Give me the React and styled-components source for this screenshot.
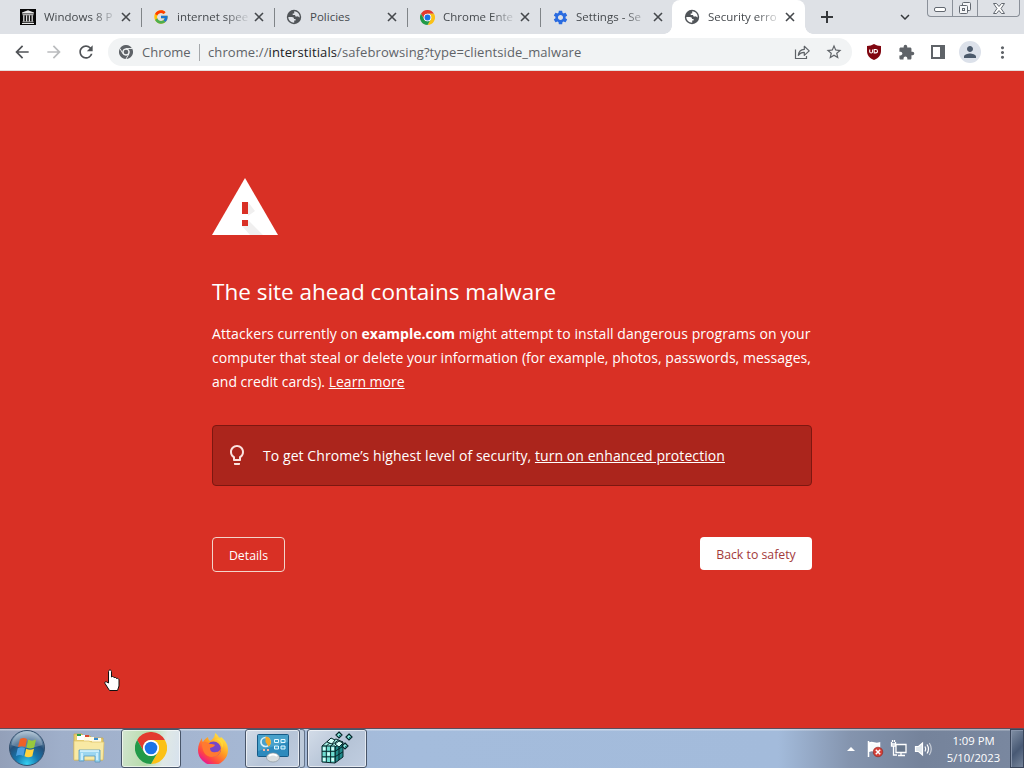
import React from "react";
import styled, { createGlobalStyle, css } from "styled-components";
import {
  MdArrowBack,
  MdArrowForward,
  MdExtension,
  MdKeyboardArrowDown,
  MdLightbulbOutline,
  MdMoreVert,
  MdPerson,
  MdRefresh,
  MdSettings,
  MdStarBorder,
} from "react-icons/md";
import { FcGoogle } from "react-icons/fc";

const tabs = [
  { id: 1, title: "Windows 8 P", icon: "archive" },
  { id: 2, title: "internet spee", icon: "google" },
  { id: 3, title: "Policies", icon: "globe" },
  { id: 4, title: "Chrome Ente", icon: "chrome" },
  { id: 5, title: "Settings - Se", icon: "settings" },
  { id: 6, title: "Security erro", icon: "globe", active: true },
];

function ChromeLogo({ size, mono }) {
  const c = mono
    ? ["#5f6368", "#5f6368", "#5f6368", "#5f6368", "#f1f3f4"]
    : ["#e33b2e", "#fbc116", "#229a48", "#1a73e8", "#fff"];
  return (
    <svg width={size} height={size} viewBox="0 0 48 48">
      <path d="M3.2 12A24 24 0 0 1 44.8 12H24A12 12 0 0 0 13.6 30Z" fill={c[0]} />
      <path d="M44.8 12A24 24 0 0 1 24 48L34.4 30A12 12 0 0 0 24 12Z" fill={c[1]} />
      <path d="M24 48A24 24 0 0 1 3.2 12L13.6 30A12 12 0 0 0 34.4 30Z" fill={c[2]} />
      {mono && (
        <path d="M24 12H45M13.6 30 3.2 12M34.4 30 24 48" stroke={c[4]} strokeWidth="3" />
      )}
      <circle cx="24" cy="24" r="12" fill={c[4]} />
      <circle cx="24" cy="24" r={mono ? 8 : 9.5} fill={c[3]} />
    </svg>
  );
}

function GlobeIcon({ land }) {
  return (
    <svg width="16" height="16" viewBox="0 0 16 16">
      <circle cx="8" cy="8" r="7.2" fill="#505458" />
      <path d="M8.2 2.3c1.8 0 3.6 1 4.7 2.7.7 1.2.9 2.3.8 3.6-.8-.2-1.2-.8-1.8-1.4-.5.3-1.2.5-2.1.3-.6-.2-.8-.8-.6-1.4H6.7V4.600h1.5Z" fill={land} />
      <path d="M2.3 8h3.5c1.7 0 2.2.8 2.2 2h1.6v1.6H8.2v2.100C5 13.700 2.300 11.300 2.300 8Z" fill={land} />
    </svg>
  );
}

function ArchiveIcon() {
  return (
    <svg width="16" height="16" viewBox="0 0 16 16">
      <path d="M0 0h16v16H0Z" fill="#080808" />
      <path d="M8 1.300 14 3.500v1H2v-1ZM2.500 5.300h11v1h-11ZM2.500 12.500h11v.8h-11ZM2 14h12v1H2Z" fill="#e8e8e8" />
      <path d="M3.800 6.300v6.200M6.600 6.300v6.200M9.400 6.300v6.200M12.200 6.300v6.200" stroke="#ddd" strokeWidth="1.3" />
    </svg>
  );
}

function Favicon({ name, active }) {
  if (name === "archive") return <ArchiveIcon />;
  if (name === "google") return <FcGoogle size={16} />;
  if (name === "chrome") return <ChromeLogo size={15} />;
  if (name === "settings") return <MdSettings size={17} color="#2a6be0" />;
  return <GlobeIcon land={active ? "#fff" : "#dee1e6"} />;
}

function CloseIcon() {
  return (
    <svg width="14" height="14" viewBox="0 0 14 14">
      <path d="m3 3 8 8M11 3l-8 8" stroke="#45484c" strokeWidth="1.6" />
    </svg>
  );
}

function ShareIcon() {
  return (
    <svg width="16" height="16" viewBox="0 0 16 16" fill="none" stroke="#5f6368" strokeWidth="1.2">
      <path d="M1.5 5.5v9h11v-2.5" />
      <path d="M4.3 11.3c.4-4 2.6-5.7 6-5.9V2.3l4.9 4.6-4.9 4.5V8.3c-2.7-.1-4.5.8-6 3Z" strokeLinejoin="round" />
    </svg>
  );
}

function ShieldIcon() {
  return (
    <svg width="16" height="18" viewBox="0 0 16 18">
      <path d="M8 1c2 1.3 4.2 2 7 2v5c0 4.5-2.5 7-7 9-4.500-2-7-4.500-7-9V3c2.800 0 5-.7 7-2Z" fill="#800610" />
      <path d="M3.700 6.500v2.300c0 1.600 2.900 1.600 2.900 0V6.500M8.200 6.500v3.400h1.600a1.700 1.700 0 0 0 0-3.400Z" fill="none" stroke="#fff" strokeWidth="1.1" />
    </svg>
  );
}

function StartOrb() {
  return (
    <svg width="38" height="38" viewBox="0 0 38 38">
      <defs>
        <radialGradient id="orb" cx=".5" cy=".95" r=".95">
          <stop offset="0" stopColor="#35d0f1" />
          <stop offset=".35" stopColor="#1677ae" />
          <stop offset=".65" stopColor="#24507a" />
          <stop offset="1" stopColor="#a4bccf" />
        </radialGradient>
      </defs>
      <circle cx="19" cy="19" r="17.5" fill="url(#orb)" stroke="#34506e" />
      <path d="M3.500 16a15.600 15.600 0 0 1 31 0c-8 3-22 4-31 0Z" fill="#fff" opacity=".25" />
      <path d="M12 10c2.600-1.400 4.800-1.200 7 .1l-1.700 8c-2.200-1.300-4.700-1.200-7.300 0Z" fill="#ee6128" />
      <path d="M20.200 10.600c2.500 1.400 5 1.400 7.800 0l-1.800 7.900c-2.700 1.300-5.200 1.300-7.700 0Z" fill="#98c93c" />
      <path d="M9.700 19.200c2.600-1.200 5-1.200 7.300.1l-1.700 7.600c-2.300-1.300-4.700-1.300-7.300 0Z" fill="#4b9fe0" />
      <path d="M18.200 19.700c2.500 1.300 5 1.300 7.800 0l-1.700 7.600c-2.700 1.300-5.300 1.300-7.800 0Z" fill="#ffd33d" />
    </svg>
  );
}

function ExplorerIcon() {
  return (
    <svg width="34" height="30" viewBox="0 0 34 30">
      <path d="M2 1h8l2 2h6l2 2h11v22H2Z" fill="#e9cf72" stroke="#c8a94d" strokeWidth=".8" />
      <path d="M5 2h9v5H5Z" fill="#fff" />
      <path d="M5 1h4v2H5Z" fill="#25a249" />
      <path d="M13 2h4v2h-4Z" fill="#d94832" />
      <path d="M12 4h10v4H12ZM20 5h9v4h-9Z" fill="#fffbe4" />
      <path d="M22 5h4v2h-4Z" fill="#398cce" />
      <path d="M2 8h15l2 1h13l-1 18H2Z" fill="#f8e9a4" stroke="#dec269" strokeWidth=".7" />
      <path d="M7 28V17h21v12h-5v-6H12v5H7Z" fill="#9bd6f1" stroke="#5798bd" strokeWidth=".8" />
      <path d="M8 18h19M10 20v7M25 20v7" stroke="#dcf5fe" strokeWidth="1.5" />
    </svg>
  );
}

function FirefoxIcon() {
  return (
    <svg width="32" height="32" viewBox="0 0 32 32">
      <defs>
        <linearGradient id="fox" x1=".85" y1=".05" x2=".2" y2=".9">
          <stop offset="0" stopColor="#fff24a" />
          <stop offset=".45" stopColor="#ff9b22" />
          <stop offset=".8" stopColor="#ff4544" />
          <stop offset="1" stopColor="#e91b8c" />
        </linearGradient>
      </defs>
      <path d="M18 1c3 2 4 4 5 7 1-1 1-2 1-3 5 4 7 8 7 13a15 15 0 0 1-30 0C1 13 3 9 5 6c0 2 0 3 1 4 1-2 3-4 5-5 0 2 1 3 2 4 3-2 5-4 5-8Z" fill="url(#fox)" />
      <circle cx="16.5" cy="17" r="7.5" fill="#7546c7" />
      <path d="M5 11c3-2 5-1 8 1 2 0 4 0 5 1-1 2-3 2-5 3 0 4 3 5 6 4 3 0 4-2 5-4 0 6-4 9-9 9-6 0-10-5-10-14Z" fill="#ff7a30" />
      <path d="M17 7c4 0 8 3 8 9 2-4 1-8-2-11-1 2-3 2-6 2Z" fill="#ffd739" />
    </svg>
  );
}

function ControlPanelIcon() {
  return (
    <svg width="34" height="30" viewBox="0 0 34 30">
      <rect x="1.5" y="1.5" width="31" height="22" rx="1" fill="#2d8abd" stroke="#155a87" />
      <path d="M2 2h30v7L2 18Z" fill="#63b7da" opacity=".5" />
      <circle cx="9.5" cy="9" r="4.5" fill="none" stroke="#d4effa" strokeWidth="1.7" />
      <path d="M9.500 9V3.500a5.500 5.500 0 0 1 3 10Z" fill="#f5a829" />
      <path d="M18.500 6.500h4v3h-4ZM25 6.500h4v3h-4ZM18.500 13h4v3h-4ZM25 13h4v3h-4Z" fill="#3aa4d1" stroke="#e4f7ff" />
      <path d="M7 17h2M11 17h2" stroke="#f4b8a4" strokeWidth="2" />
      <ellipse cx="17" cy="24.5" rx="6.5" ry="4.5" fill="#d8dddf" stroke="#8b959c" strokeWidth=".7" />
      <path d="M13 23c2-2 6-2 8 0" stroke="#fff" strokeWidth="2" fill="none" />
    </svg>
  );
}

function RegistryIcon() {
  return (
    <svg width="34" height="34" viewBox="0 0 34 34" stroke="#06272b" strokeWidth="1">
      <path d="m2 15 8-7 4 1 2-1 7 3-8 5Z" fill="#a5eee3" />
      <path d="m15 16 8-5v15l-8 6Z" fill="#21898a" />
      <path d="M2 15h13v17l-13-1Z" fill="#6fdcd0" />
      <path d="M2 20.300h13l8-5M2 25.800h13l8-5M6.300 15v16M10.600 15v17M19 13.500V29M6.300 15l7-6M10.600 15l8-6" fill="none" />
      <path d="m7 11 4-4 4 2-3 4ZM15 13l4-3 4 2-4 4Z" fill="#d5fff8" />
      <path d="M3 16.300h2.500v3H3ZM7.300 21.500h2.500v3H7.300ZM3 27h2.500v3H3ZM11.500 27h2.500v3h-2.500ZM11.500 16.300h2.500v3h-2.500Z" fill="#d5fff8" stroke="none" />
      <path d="m19 1 3 3-3 3-3-3ZM29 3l3 3-3 3-3-3ZM25 12l3 3-3 3-3-3Z" fill="#8ee9df" strokeWidth="1.2" />
      <path d="M19 4h2l-2 2ZM29 6h2l-2 2ZM25 15h2l-2 2Z" fill="#14797c" stroke="none" />
    </svg>
  );
}

function TrayFlag() {
  return (
    <svg width="18" height="18" viewBox="0 0 18 18">
      <path d="M2.500 1v16M3.500 3c4-2 5 2 10 0v8c-5 2-6-2-10 0Z" fill="#f6fafc" stroke="#fff" strokeWidth="1.5" />
      <circle cx="12" cy="12" r="4.8" fill="#d53f37" stroke="#8b211d" strokeWidth=".6" />
      <path d="m9.800 9.800 4.400 4.400m0-4.400-4.400 4.400" stroke="#fff" strokeWidth="1.5" />
    </svg>
  );
}

function TrayNetwork() {
  return (
    <svg width="18" height="18" viewBox="0 0 18 18" fill="none" stroke="#fff" strokeWidth="1.3">
      <path d="M6 4.500h10v8H6ZM8 15.500h7M11 13v2" fill="#68778c" />
      <path d="M1.500 2v4h4V2M1.500 4h4M3.500 6v9H7M2.500 0v2M4.500 0v2" />
    </svg>
  );
}

function TrayVolume() {
  return (
    <svg width="18" height="18" viewBox="0 0 18 18" fill="none" stroke="#fff" strokeWidth="1.2">
      <path d="M1.500 6.500h3L8.500 3v12l-4-3.500h-3Z" fill="#dfe6ec" />
      <path d="M11 6.500c1 1.700 1 3.300 0 5M13 4.500c2 3 2 6 0 9" />
      <path d="M15.300 3c2.600 4 2.600 8 0 12" opacity=".6" />
    </svg>
  );
}

function App() {
  return (
    <Screen>
      <GlobalStyle />
      <TabStrip>
        {tabs.map((tab) => (
          <Tab key={tab.id} $active={tab.active}>
            <TabIcon>
              <Favicon name={tab.icon} active={tab.active} />
            </TabIcon>
            <TabTitle $fade={tab.title !== "Policies"}>{tab.title}</TabTitle>
            <CloseIcon />
          </Tab>
        ))}
        <NewTab>
          <svg width="20" height="20" viewBox="0 0 20 20">
            <path d="M10 4v12M4 10h12" stroke="currentColor" strokeWidth="2" />
          </svg>
        </NewTab>
        <TabSearch>
          <MdKeyboardArrowDown size={18} />
        </TabSearch>
        <WindowControls>
          <WindowButton $width={24}>
            <svg width="14" height="7" viewBox="0 0 14 7">
              <rect x="1.5" y="2.5" width="11" height="4" rx="1.5" fill="#fff" stroke="#626870" />
            </svg>
          </WindowButton>
          <WindowButton $width={25}>
            <svg width="14" height="14" viewBox="0 0 14 14" fill="#f5f6f8" stroke="#626870">
              <rect x="4.5" y="1.5" width="8" height="8" rx="1" />
              <rect x="1.5" y="4.5" width="8" height="8" rx="1" />
              <rect x="4.5" y="7.5" width="2" height="2" />
            </svg>
          </WindowButton>
          <WindowButton $width={42}>
            <svg width="14" height="13" viewBox="0 0 14 13">
              <path d="M1.500 1.500h3L7 4.500l2.500-3h3L9 6.500l3.500 5h-3L7 8.500l-2.500 3h-3L5 6.500Z" fill="#fff" stroke="#626870" />
            </svg>
          </WindowButton>
        </WindowControls>
      </TabStrip>

      <Toolbar>
        <NavButton><MdArrowBack size={20} /></NavButton>
        <NavButton $disabled><MdArrowForward size={20} /></NavButton>
        <NavButton><MdRefresh size={20} /></NavButton>
        <Omnibox>
          <ChromeLogo size={14} mono />
          <SiteLabel>Chrome</SiteLabel>
          <Url>chrome://<b>interstitials</b>/safebrowsing?type=clientside_malware</Url>
          <ShareIcon />
          <MdStarBorder size={18} color="#5f6368" />
        </Omnibox>
        <Actions>
          <ActionSlot><ShieldIcon /></ActionSlot>
          <ActionSlot><MdExtension size={17} /></ActionSlot>
          <ActionSlot>
            <svg width="14" height="14" viewBox="0 0 14 14">
              <path d="M0 0h14v14H0ZM2 2v10h7V2Z" fill="#5f6368" fillRule="evenodd" />
            </svg>
          </ActionSlot>
          <ActionSlot><Avatar><MdPerson size={18} /></Avatar></ActionSlot>
          <ActionSlot><MdMoreVert size={19} /></ActionSlot>
        </Actions>
      </Toolbar>

      <Page>
        <Warning>
          <svg width="66" height="57" viewBox="0 0 66 57">
            <path d="M33 0 66 57H0Z" fill="#fff" />
            <path d="m36 24 7 9-7 5ZM36 42l15 15H38l-8-9h6Z" fill="#f0efef" />
            <path d="M30 24h6v12h-6ZM30 42h6v6h-6Z" fill="#d93025" />
          </svg>
          <Title>The site ahead contains malware</Title>
          <Message>
            <MessageLine $spacing="0.085px">
              Attackers currently on <strong>example.com</strong> might attempt to install dangerous programs on your
            </MessageLine>
            <MessageLine $spacing="0.035px">
              computer that steal or delete your information (for example, photos, passwords, messages,
            </MessageLine>
            <MessageLine $spacing="0.01px">
              and credit cards). <Link>Learn more</Link>
            </MessageLine>
          </Message>
          <Promo>
            <MdLightbulbOutline size={24} color="#fbe3df" />
            <PromoText>
              To get Chrome’s highest level of security, <Link>turn on enhanced protection</Link>
            </PromoText>
          </Promo>
          <ButtonRow>
            <DetailsButton>Details</DetailsButton>
            <SafetyButton>Back to safety</SafetyButton>
          </ButtonRow>
        </Warning>
        <Cursor width="17" height="23" viewBox="0 0 17 23">
          <path d="M4.500 14V2.500c0-2 3-2 3 0V8l1-.5c1 0 1.500.5 1.500 1.200 1-.6 2.200-.2 2.500.8 1.200-.5 2.500.2 2.500 1.500v6l-1.500 4.500h-8L1 14.500c-.7-1.400.7-2.400 1.800-1.500Z" fill="#fff" stroke="#111" />
        </Cursor>
      </Page>

      <Taskbar>
        <TaskSlot $width={53}><StartOrb /></TaskSlot>
        <TaskSlot $width={68} $left={3}><ExplorerIcon /></TaskSlot>
        <TaskButton $width={60} $active><ChromeLogo size={32} /></TaskButton>
        <TaskSlot $width={64}><FirefoxIcon /></TaskSlot>
        <TaskButton $width={55}><ControlPanelIcon /></TaskButton>
        <StackEdge />
        <TaskButton $width={60}><RegistryIcon /></TaskButton>
        <Tray>
          <TrayArrow />
          <TrayFlag />
          <TrayNetwork />
          <TrayVolume />
        </Tray>
        <Clock>
          <span>1:09 PM</span>
          <span>5/10/2023</span>
        </Clock>
        <ShowDesktop />
      </Taskbar>
    </Screen>
  );
}

const GlobalStyle = createGlobalStyle`
  * {
    box-sizing: border-box;
  }
  body {
    margin: 0;
    overflow: hidden;
    font-family: "Open Sans", "Noto Sans", sans-serif;
  }
  svg {
    display: block;
    flex-shrink: 0;
  }
`;

const Screen = styled.div`
  display: flex;
  flex-direction: column;
  width: 1024px;
  height: 768px;
  overflow: hidden;
`;

const TabStrip = styled.div`
  display: flex;
  height: 34px;
  padding-left: 8px;
  background: #dee1e6;
`;

const Tab = styled.div`
  position: relative;
  display: flex;
  align-items: center;
  width: 133px;
  height: 34px;
  padding: 0 8px 0 12px;
  color: #45494d;

  ${(props) =>
    props.$active
      ? css`
          margin-left: -1px;
          margin-right: 1px;
          background: #fff;
          border-radius: 8px 8px 0 0;
          &::before,
          &::after {
            content: "";
            position: absolute;
            bottom: 0;
            width: 8px;
            height: 8px;
          }
          &::before {
            left: -8px;
            background: radial-gradient(circle at 0 0, transparent 7.5px, #fff 8px);
          }
          &::after {
            right: -8px;
            background: radial-gradient(circle at 100% 0, transparent 7.5px, #fff 8px);
          }
        `
      : css`
          &:not(:nth-child(5))::after {
            content: "";
            position: absolute;
            right: -1px;
            top: 8px;
            width: 1px;
            height: 19px;
            background: #808488;
          }
        `}
`;

const TabIcon = styled.div`
  display: flex;
  align-items: center;
  justify-content: center;
  width: 16px;
  height: 16px;
  margin-right: 8px;
`;

const TabTitle = styled.span`
  flex: 1;
  font-size: 11.5px;
  line-height: 20px;
  white-space: nowrap;
  ${(props) =>
    props.$fade &&
    css`
      mask-image: linear-gradient(90deg, #000 48px, rgba(0, 0, 0, 0.15) 70px);
    `}
`;

const NewTab = styled.div`
  display: flex;
  align-items: center;
  margin-left: 11px;
  color: #35383b;
`;

const TabSearch = styled(NewTab)`
  margin-left: 59px;
`;

const WindowControls = styled.div`
  display: flex;
  width: 93px;
  height: 17px;
  margin-left: 13px;
  border: 1px solid #8a9099;
  border-top: none;
  border-radius: 0 0 4px 4px;
`;

const WindowButton = styled.div`
  display: flex;
  align-items: center;
  justify-content: center;
  width: ${(props) => props.$width}px;
  height: 16px;
  & + & {
    border-left: 1px solid #8a9099;
  }
`;

const Toolbar = styled.div`
  display: flex;
  align-items: center;
  height: 37px;
  padding-left: 6px;
  background: #fff;
  border-bottom: 1px solid #e5dedd;
`;

const NavButton = styled.div`
  display: flex;
  align-items: center;
  justify-content: center;
  width: 32px;
  color: ${(props) => (props.$disabled ? "#babcbe" : "#505357")};
`;

const Omnibox = styled.div`
  display: flex;
  align-items: center;
  width: 744px;
  height: 28px;
  margin-left: 6px;
  padding: 0 9px 0 11px;
  border-radius: 14px;
  background: #f1f3f4;
  color: #5f6368;
  font-size: 13px;
  & > svg:last-child {
    margin-left: 15px;
  }
`;

const SiteLabel = styled.span`
  width: 58px;
  margin-left: 9px;
  line-height: 17px;
  border-right: 1px solid #a5a8ab;
`;

const Url = styled.span`
  flex: 1;
  margin-left: 8px;
  letter-spacing: 0.1px;
  white-space: nowrap;
  b {
    font-weight: 400;
    color: #202124;
  }
`;

const Actions = styled.div`
  display: flex;
  margin-left: 6px;
  color: #5f6368;
`;

const ActionSlot = styled.div`
  display: flex;
  align-items: center;
  justify-content: center;
  width: 32px;
`;

const Avatar = styled.div`
  display: flex;
  align-items: center;
  justify-content: center;
  width: 22px;
  height: 22px;
  border-radius: 50%;
  background: #dce1ea;
  color: #4c5a6c;
`;

const Page = styled.main`
  position: relative;
  display: flex;
  justify-content: center;
  height: 657px;
  background: #d93025;
  color: #fff;
`;

const Warning = styled.section`
  display: flex;
  flex-direction: column;
  width: 600px;
  padding-top: 107px;
`;

const Title = styled.h1`
  margin: 41px 0 0;
  font-size: 22.5px;
  font-weight: 400;
  line-height: 32px;
`;

const Message = styled.p`
  margin: 14px 0 0;
  font-size: 14px;
  line-height: 24px;
  strong {
    letter-spacing: 0;
  }
`;

const MessageLine = styled.span`
  display: block;
  letter-spacing: ${(props) => props.$spacing};
  white-space: nowrap;
`;

const Link = styled.a`
  text-decoration: underline;
  text-underline-offset: 1px;
  cursor: pointer;
`;

const Promo = styled.div`
  display: flex;
  align-items: center;
  height: 61px;
  margin-top: 31px;
  padding-left: 12px;
  border: 1px solid #7d1710;
  border-radius: 4px;
  background: #ab251c;
  & > svg {
    margin-top: -2px;
  }
`;

const PromoText = styled.span`
  margin-left: 14px;
  font-size: 14px;
  letter-spacing: 0.07px;
  white-space: nowrap;
`;

const ButtonRow = styled.div`
  display: flex;
  justify-content: space-between;
  align-items: flex-start;
  margin-top: 51px;
`;

const Button = styled.button`
  border: none;
  border-radius: 4px;
  font-family: inherit;
  font-size: 12.3px;
`;

const DetailsButton = styled(Button)`
  width: 73px;
  height: 35px;
  padding: 1px 0 0;
  border: 1px solid #f3d4ca;
  background: transparent;
  color: #fff;
`;

const SafetyButton = styled(Button)`
  width: 112px;
  height: 33px;
  padding: 1px 0 0;
  background: #fff;
  color: #a33a3a;
`;

const Cursor = styled.svg`
  position: absolute;
  left: 104px;
  top: 598px;
`;

const Taskbar = styled.div`
  display: flex;
  height: 40px;
  border-top: 1px solid #5d4e5d;
  background:
    linear-gradient(180deg, rgba(255, 255, 255, 0.4) 1px, transparent 2px),
    linear-gradient(90deg, #93a0b9 0, #9fafca 6%, #a5b6d1 20%, #a4bcdc 40%, #a3bbdb 76%, #8494ae 83%, #75839b 90%, #7a88a0 100%);
`;

const TaskSlot = styled.div`
  display: flex;
  align-items: center;
  justify-content: center;
  width: ${(props) => props.$width}px;
  padding-left: ${(props) => props.$left || 0}px;
  & > svg {
    margin-top: -1px;
  }
`;

const TaskButton = styled(TaskSlot)`
  border: 1px solid #485569;
  border-radius: 3px;
  box-shadow: inset 0 0 0 1px rgba(255, 255, 255, 0.6);
  background: ${(props) =>
    props.$active
      ? "linear-gradient(100deg, #d3e5d0, #b5dba9 45%, #dfe8e6 72%, #d6e1ee)"
      : "linear-gradient(135deg, #d3dce8, #b6c4d7 55%, #c0cde0)"};
`;

const StackEdge = styled.div`
  width: 5px;
  margin-right: 2px;
  border: 1px solid #65758b;
  border-left: none;
  border-radius: 0 3px 3px 0;
  background: #bdcada;
`;

const Tray = styled.div`
  display: flex;
  align-items: center;
  gap: 6px;
  margin-left: auto;
`;

const TrayArrow = styled.div`
  margin-right: 5px;
  border: 4px solid transparent;
  border-top: none;
  border-bottom: 4px solid #fff;
`;

const Clock = styled.div`
  display: flex;
  flex-direction: column;
  align-items: center;
  width: 78px;
  padding: 3px 0 0 5px;
  color: #fff;
  font-size: 11.3px;
  line-height: 17px;
`;

const ShowDesktop = styled.div`
  width: 14px;
  border: 1px solid #39455a;
  box-shadow: inset 1px 1px 0 #8794aa;
  background: linear-gradient(135deg, #8190a5, #485974 55%, #75849a);
`;

export default App;
